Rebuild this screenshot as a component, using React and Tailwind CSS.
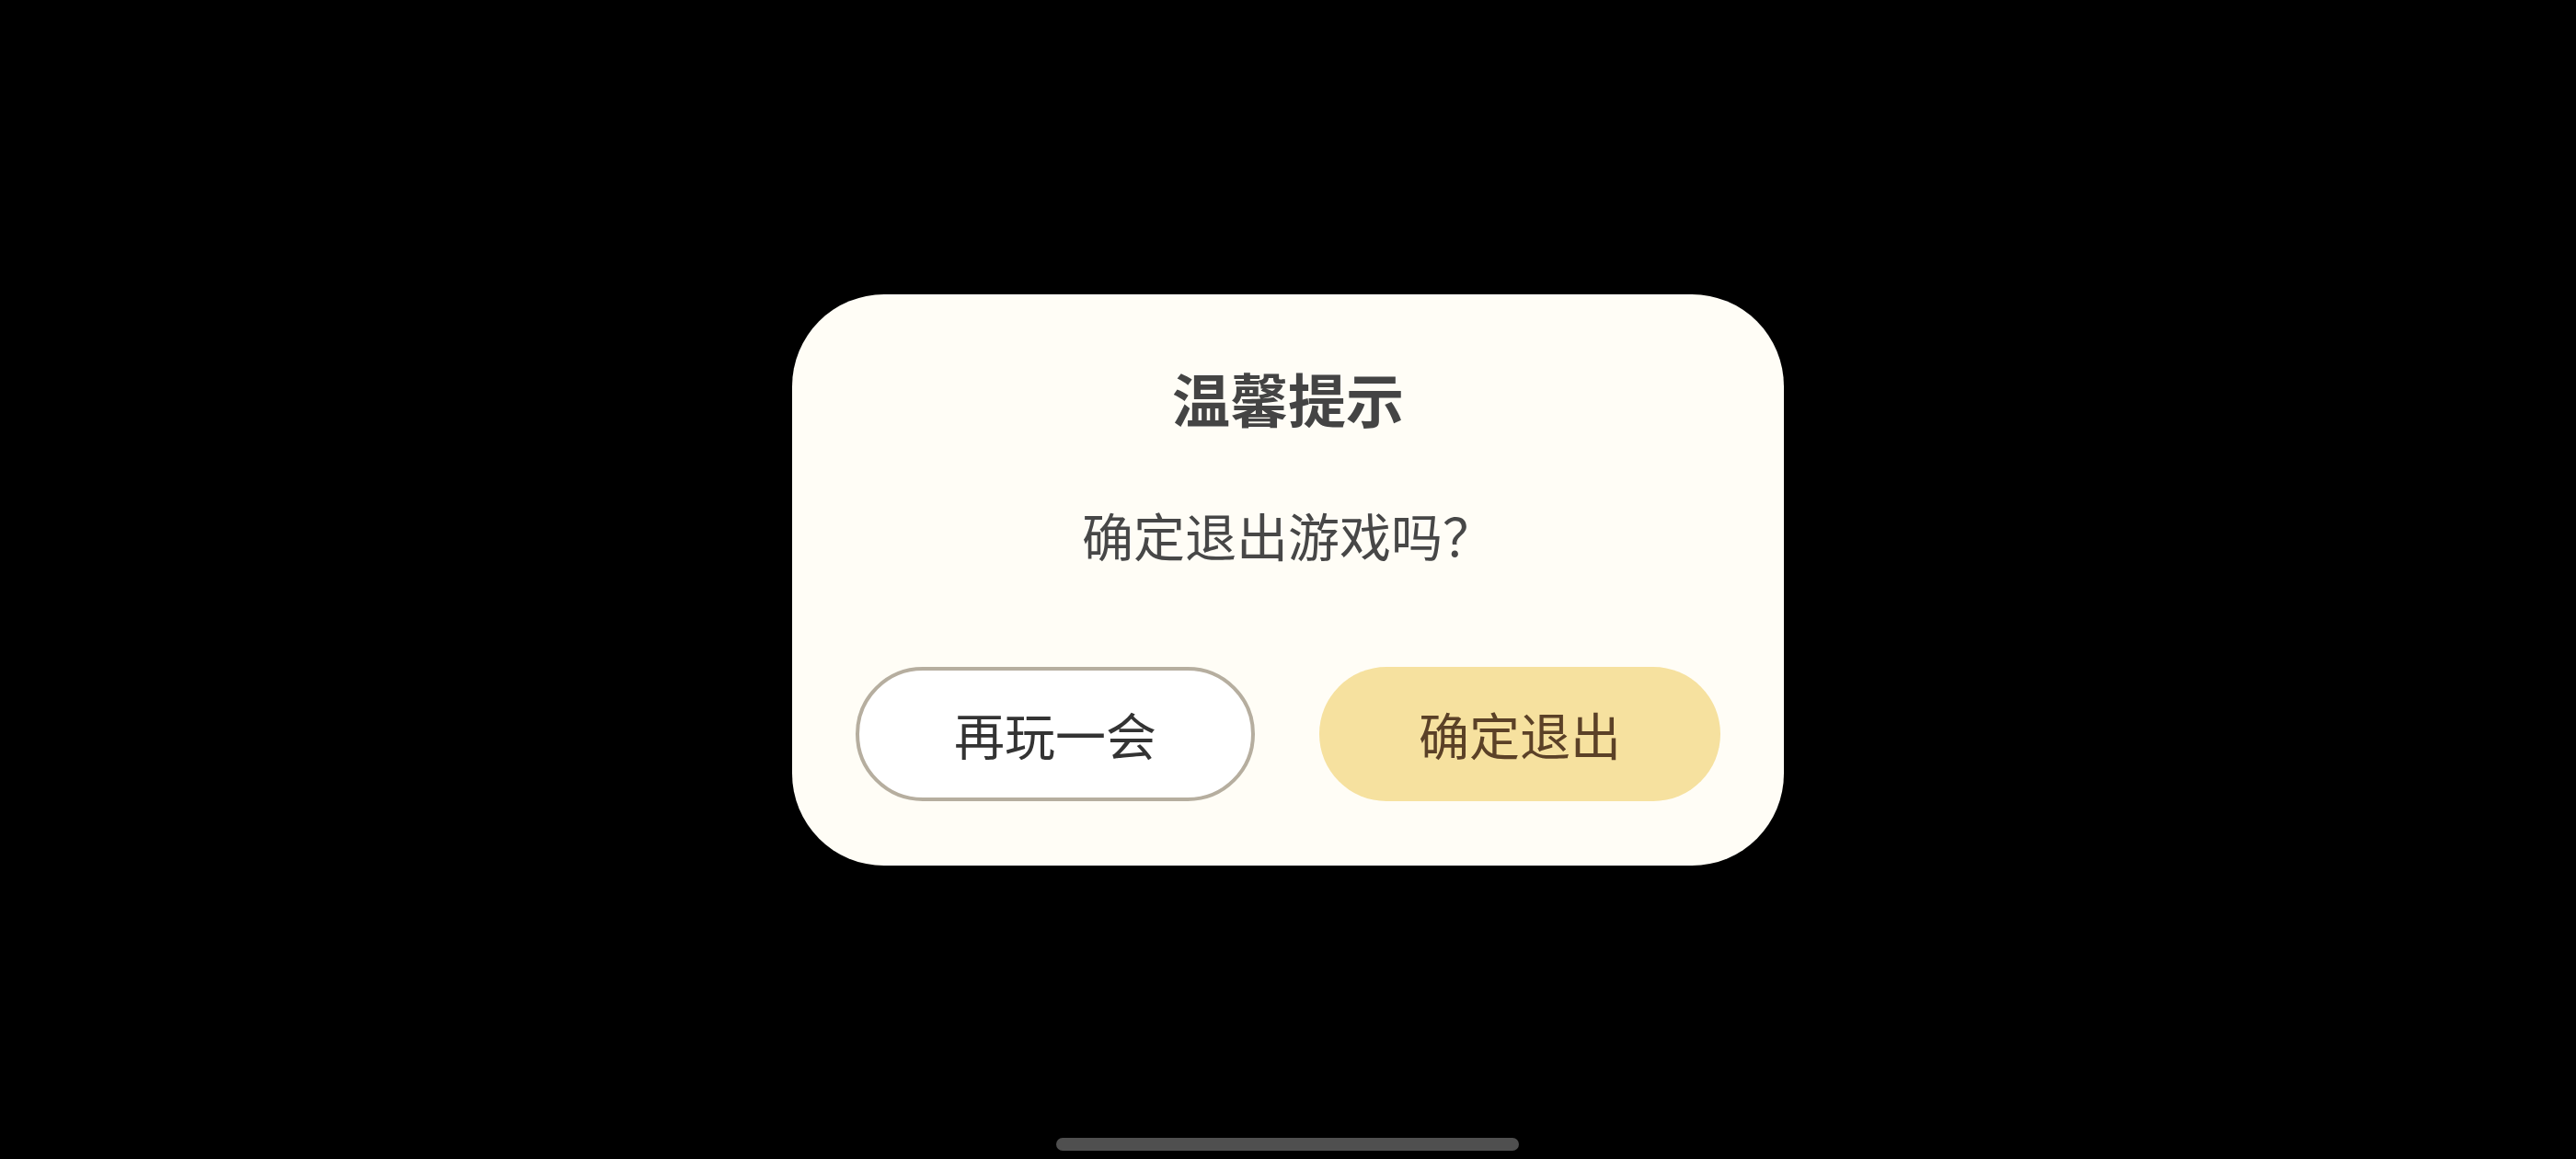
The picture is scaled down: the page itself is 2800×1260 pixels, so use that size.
import React from "react";

const font = { fontFamily: '"Noto Sans CJK SC", "Noto Sans", sans-serif' };

const ExitDialog = () => {
  return (
    <div className="w-[1078px] h-[621px] rounded-[100px] bg-[#fffdf6] flex flex-col items-center pt-[80px] pb-[70px] px-[69px]">
      {/* Title */}
      <h2 className="text-[63px] leading-none font-bold text-[#444444]">温馨提示</h2>

      {/* Message */}
      <p className="mt-[90px] text-[56px] leading-none text-[#474747]">确定退出游戏吗？</p>

      {/* Actions */}
      <div className="mt-auto w-full flex justify-between">
        <button className="w-[434px] h-[146px] rounded-full border-[4px] border-[#b6ae9f] bg-white text-[55px] leading-none text-[#333333] flex items-center justify-center">
          再玩一会
        </button>
        <button className="w-[436px] h-[146px] rounded-full bg-[#f6e19f] text-[55px] leading-none text-[#5b4127] flex items-center justify-center">
          确定退出
        </button>
      </div>
    </div>
  );
};

export default function App() {
  return (
    <div className="relative w-[2800px] h-[1260px] bg-black flex items-center justify-center overflow-hidden" style={font}>
      <ExitDialog />

      {/* Home indicator */}
      <div className="absolute left-[1148px] bottom-[9px] w-[503px] h-[14px] rounded-full bg-[#4f4f4f]" />
    </div>
  );
}
